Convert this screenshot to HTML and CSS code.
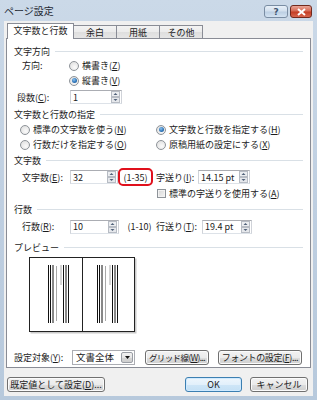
FILE: index.html
```html
<!DOCTYPE html>
<html lang="ja">
<head>
    <meta charset="UTF-8">
    <meta name="viewport" content="width=device-width, initial-scale=1.0">
    <title>ページ設定</title>
    <link rel="stylesheet" href="styles.css">
</head>
<body>
    <div class="window">
        <div class="titlebar">
            <span class="title">ページ設定</span>
            <div class="caption-buttons">
                <span class="cap-btn help">?</span>
                <span class="cap-btn close">
                    <svg width="9" height="8" viewBox="0 0 9 8"><path d="M1 1L8 7M8 1L1 7" stroke="#fff" stroke-width="2"/></svg>
                </span>
            </div>
        </div>

        <div class="client">
            <div class="tabs">
                <span class="tab active">文字数と行数</span>
                <span class="tab">余白</span>
                <span class="tab">用紙</span>
                <span class="tab">その他</span>
            </div>

            <div class="panel">
                <!-- 文字方向 -->
                <div class="group-title gt-1"><span>文字方向</span></div>
                <div class="row row-dir">
                    <span class="label w-dir">方向:</span>
                    <span class="radio"></span><span>横書き(<u>Z</u>)</span>
                </div>
                <div class="row row-tate">
                    <span class="radio checked"></span><span>縦書き(<u>V</u>)</span>
                </div>
                <div class="row row-dan">
                    <span class="label w-dan">段数(<u>C</u>):</span>
                    <span class="field w-52">1
                        <svg class="spin" width="9" height="12" viewBox="0 0 9 12"><rect x="0.5" y="0.5" width="8" height="5" fill="#eceef1" stroke="#b7bcc4"/><rect x="0.5" y="6.5" width="8" height="5" fill="#e6e8ec" stroke="#b7bcc4"/><path d="M4.5 2L6.5 4H2.5Z" fill="#4f6078"/><path d="M2.5 8H6.5L4.5 10Z" fill="#4f6078"/></svg>
                    </span>
                </div>

                <!-- 文字数と行数の指定 -->
                <div class="group-title gt-2"><span>文字数と行数の指定</span></div>
                <div class="row row-opt">
                    <span class="opt"><span class="radio"></span><span>標準の文字数を使う(<u>N</u>)</span></span>
                    <span class="opt"><span class="radio checked"></span><span>文字数と行数を指定する(<u>H</u>)</span></span>
                </div>
                <div class="row row-opt">
                    <span class="opt"><span class="radio"></span><span>行数だけを指定する(<u>O</u>)</span></span>
                    <span class="opt"><span class="radio"></span><span>原稿用紙の設定にする(<u>X</u>)</span></span>
                </div>

                <!-- 文字数 -->
                <div class="group-title gt-3"><span>文字数</span></div>
                <div class="row row-num">
                    <span class="label w-num">文字数(<u>E</u>):</span>
                    <span class="field w-48">32
                        <svg class="spin" width="9" height="12" viewBox="0 0 9 12"><rect x="0.5" y="0.5" width="8" height="5" fill="#eceef1" stroke="#b7bcc4"/><rect x="0.5" y="6.5" width="8" height="5" fill="#e6e8ec" stroke="#b7bcc4"/><path d="M4.5 2L6.5 4H2.5Z" fill="#4f6078"/><path d="M2.5 8H6.5L4.5 10Z" fill="#4f6078"/></svg>
                    </span>
                    <span class="range marked">(1-35)</span>
                    <span class="label w-pitch">字送り(<u>I</u>):</span>
                    <span class="field w-52">14.15 pt
                        <svg class="spin" width="9" height="12" viewBox="0 0 9 12"><rect x="0.5" y="0.5" width="8" height="5" fill="#eceef1" stroke="#b7bcc4"/><rect x="0.5" y="6.5" width="8" height="5" fill="#e6e8ec" stroke="#b7bcc4"/><path d="M4.5 2L6.5 4H2.5Z" fill="#4f6078"/><path d="M2.5 8H6.5L4.5 10Z" fill="#4f6078"/></svg>
                    </span>
                </div>
                <div class="row row-check">
                    <span class="checkbox"></span><span>標準の字送りを使用する(<u>A</u>)</span>
                </div>

                <!-- 行数 -->
                <div class="group-title gt-4"><span>行数</span></div>
                <div class="row row-lines">
                    <span class="label w-num">行数(<u>R</u>):</span>
                    <span class="field w-49">10
                        <svg class="spin" width="9" height="12" viewBox="0 0 9 12"><rect x="0.5" y="0.5" width="8" height="5" fill="#eceef1" stroke="#b7bcc4"/><rect x="0.5" y="6.5" width="8" height="5" fill="#e6e8ec" stroke="#b7bcc4"/><path d="M4.5 2L6.5 4H2.5Z" fill="#4f6078"/><path d="M2.5 8H6.5L4.5 10Z" fill="#4f6078"/></svg>
                    </span>
                    <span class="range plain">(1-10)</span>
                    <span class="label w-lpitch">行送り(<u>T</u>):</span>
                    <span class="field w-50">19.4 pt
                        <svg class="spin" width="9" height="12" viewBox="0 0 9 12"><rect x="0.5" y="0.5" width="8" height="5" fill="#eceef1" stroke="#b7bcc4"/><rect x="0.5" y="6.5" width="8" height="5" fill="#e6e8ec" stroke="#b7bcc4"/><path d="M4.5 2L6.5 4H2.5Z" fill="#4f6078"/><path d="M2.5 8H6.5L4.5 10Z" fill="#4f6078"/></svg>
                    </span>
                </div>

                <!-- プレビュー -->
                <div class="group-title gt-5"><span>プレビュー</span></div>
                <svg class="preview" width="108" height="77" viewBox="0 0 108 77">
                    <rect x="1.5" y="1.5" width="106" height="75" fill="#c9c9c9"/>
                    <rect x="0.5" y="0.5" width="105" height="74" fill="#fff" stroke="#222"/>
                    <path d="M53.5 1V75" stroke="#222"/>
                    <g stroke="#111">
                        <path d="M19.5 8V66M21.5 8V66M24 8V66M34.5 8V66M37 8V66M39.5 8V66"/>
                        <path d="M68.5 8V66M70.5 8V66M73 8V66M83.5 8V66M86 8V66M88.5 8V66"/>
                    </g>
                    <g stroke="#a8a8a8">
                        <path d="M27.5 9V64M32 8V28M76.5 9V64M81 8V28"/>
                    </g>
                </svg>

                <div class="row row-apply">
                    <span class="label w-apply">設定対象(<u>Y</u>):</span>
                    <span class="select">文書全体
                        <span class="drop"><svg width="5" height="3" viewBox="0 0 5 3"><path d="M0 0H5L2.5 3Z" fill="#111"/></svg></span>
                    </span>
                    <span class="button grid-btn">グリッド線(<u>W</u>)...</span>
                    <span class="button font-btn">フォントの設定(<u>F</u>)...</span>
                </div>
            </div>

            <div class="footer">
                <span class="button default-btn">既定値として設定(<u>D</u>)...</span>
                <span class="button ok-btn">OK</span>
                <span class="button cancel-btn">キャンセル</span>
            </div>
        </div>
    </div>
</body>
</html>
```

FILE: styles.css
```css
* {
    box-sizing: border-box;
    margin: 0;
    padding: 0;
}

body {
    font-family: "Noto Sans CJK JP", "Noto Sans", sans-serif;
    font-size: 9px;
    color: #1b1b1b;
    background: #fff;
    white-space: nowrap;
}

u {
    text-decoration-thickness: 1px;
    text-underline-offset: 1px;
}

.window {
    width: 317px;
    height: 400px;
    background: linear-gradient(180deg, #cbd9e8 0%, #bfcfe1 50%, #b7c9dc 100%);
    padding: 0 4px 4px 4px;
    display: flex;
    flex-direction: column;
}

/* title bar */
.titlebar {
    height: 21px;
    display: flex;
    align-items: flex-start;
}

.title {
    font-size: 10px;
    color: #1e2833;
    line-height: 21px;
}

.caption-buttons {
    margin-left: auto;
    margin-top: 5px;
    margin-right: 1px;
    display: flex;
    gap: 2px;
}

.cap-btn {
    height: 13px;
    border-radius: 3px;
    display: flex;
    align-items: center;
    justify-content: center;
}

.help {
    width: 24px;
    border: 1px solid #7a8da3;
    background: linear-gradient(180deg, #e8f0f8 0%, #d3e0ee 45%, #bccfe3 55%, #d4e3f2 100%);
    color: #3f5670;
    font-family: "DejaVu Sans", sans-serif;
    font-size: 9px;
    font-weight: bold;
}

.close {
    width: 22px;
    border: 1px solid #71291d;
    background: linear-gradient(180deg, #eaa597 0%, #d66a55 45%, #c43e25 55%, #d8664e 100%);
}

/* client area */
.client {
    flex: 1;
    background: #f0f0f0;
    padding: 2px 2px 0 2px;
    display: flex;
    flex-direction: column;
}

.tabs {
    height: 16px;
    display: flex;
    align-items: flex-end;
    padding-left: 1px;
}

.tab {
    height: 13px;
    margin-bottom: 1px;
    width: 43px;
    border: 1px solid #898c95;
    border-bottom: none;
    border-left: none;
    background: linear-gradient(180deg, #f3f3f3 0%, #ebebeb 50%, #dedede 51%, #e6e6e6 100%);
    display: flex;
    align-items: center;
    justify-content: center;
}

.tab.active {
    width: 67px;
    height: 16px;
    margin-bottom: 0;
    border-left: 1px solid #898c95;
    background: #fff;
    position: relative;
    z-index: 1;
    padding-bottom: 2px;
}

.panel {
    margin-top: -1px;
    width: 305px;
    height: 330px;
    background: #fff;
    border: 1px solid #898c95;
    padding: 5px 7px 4px 7px;
}

/* group titles with separator line */
.group-title {
    display: flex;
    align-items: center;
    height: 16px;
}

.group-title::after {
    content: "";
    flex: 1;
    height: 1px;
    background: #d9e0e6;
    margin-left: 5px;
}

.gt-1 { height: 14px; }
.gt-4 { height: 17px; }
.gt-5 { height: 14px; margin-top: 5px; }

.row {
    display: flex;
    align-items: center;
}

.row-dir { height: 15px; padding-left: 8px; }
.row-tate { height: 15px; padding-left: 55px; }
.row-dan { height: 18px; padding-left: 3px; }
.row-opt { height: 15px; padding-left: 6px; }
.row-num { height: 18px; padding-left: 8px; }
.row-check { height: 15px; padding-left: 143px; }
.row-lines { height: 17px; padding-left: 8px; }
.row-apply { height: 16px; margin-top: 15px; }

.label { flex-shrink: 0; }
.w-dir { width: 47px; }
.w-dan { width: 53px; }
.w-num { width: 48px; }
.w-pitch { width: 42px; margin-left: 3px; }
.w-lpitch { width: 46px; }
.w-apply { width: 58px; }

.opt {
    display: flex;
    align-items: center;
    width: 136px;
}

/* radio buttons */
.radio {
    width: 10px;
    height: 10px;
    border-radius: 50%;
    border: 1px solid #8e9399;
    background: radial-gradient(circle at 60% 65%, #fbfbfb 0%, #e4e4e4 70%, #d4d4d4 100%);
    margin-right: 3px;
    flex-shrink: 0;
    display: flex;
    align-items: center;
    justify-content: center;
}

.radio.checked::after {
    content: "";
    width: 5px;
    height: 5px;
    border-radius: 50%;
    background: radial-gradient(circle at 40% 35%, #8fc3ef 0%, #2f77bb 55%, #1b4f86 100%);
}

.checkbox {
    width: 9px;
    height: 9px;
    border: 1px solid #8e9399;
    background: linear-gradient(135deg, #d6d6d6 0%, #f4f4f4 100%);
    box-shadow: inset 0 0 0 1px #f2f2f2;
    margin-right: 3px;
    flex-shrink: 0;
}

/* text fields with spinner */
.field {
    height: 14px;
    border: 1px solid #abadb3;
    border-left-color: #d0d3d9;
    border-right-color: #d0d3d9;
    border-bottom-color: #dde2e8;
    background: #fff;
    display: flex;
    align-items: center;
    padding: 0 1px 0 2px;
    flex-shrink: 0;
}

.spin { margin-left: auto; }

.w-48 { width: 48px; }
.w-49 { width: 49px; }
.w-50 { width: 50px; }
.w-52 { width: 52px; }

.range {
    flex-shrink: 0;
    display: flex;
    align-items: center;
    justify-content: center;
}

.range.marked {
    width: 35px;
    height: 18px;
    border: 2px solid #e0101c;
    border-radius: 5px;
}

.range.plain {
    width: 33px;
    margin-left: 4px;
}

.preview {
    display: block;
    margin: 3px 0 0 15px;
}

.select {
    width: 63px;
    height: 15px;
    border: 1px solid #abadb3;
    background: #fff;
    display: flex;
    align-items: center;
    padding: 0 1px 0 3px;
    font-size: 9.5px;
}

.drop {
    margin-left: auto;
    width: 12px;
    height: 11px;
    border: 1px solid #9a9ea5;
    border-radius: 2px;
    background: linear-gradient(180deg, #f2f2f2 0%, #e6e6e6 50%, #d6d6d6 51%, #cfcfcf 100%);
    display: flex;
    align-items: center;
    justify-content: center;
}

/* push buttons */
.button {
    height: 15px;
    border: 1px solid #707070;
    border-radius: 3px;
    background: linear-gradient(180deg, #f2f2f2 0%, #ebebeb 50%, #dddddd 51%, #cfcfcf 100%);
    box-shadow: inset 0 0 0 1px #fbfbfb;
    display: flex;
    align-items: center;
    justify-content: center;
    flex-shrink: 0;
}

.grid-btn {
    width: 64px;
    margin-left: 10px;
    font-size: 8.5px;
    letter-spacing: -0.6px;
}

.font-btn {
    width: 84px;
    margin-left: 9px;
    letter-spacing: -0.4px;
}

.footer {
    display: flex;
    margin-top: 9px;
}

.default-btn { width: 98px; margin-left: 1px; }

.ok-btn {
    width: 57px;
    margin-left: auto;
    border-color: #3c7fb1;
    background: linear-gradient(180deg, #eef6fc 0%, #e2f0fb 50%, #cfe6f7 51%, #c4e0f5 100%);
    box-shadow: inset 0 0 0 1px #cfeaff;
}

.cancel-btn { width: 58px; margin-left: 8px; margin-right: 3px; }
```
